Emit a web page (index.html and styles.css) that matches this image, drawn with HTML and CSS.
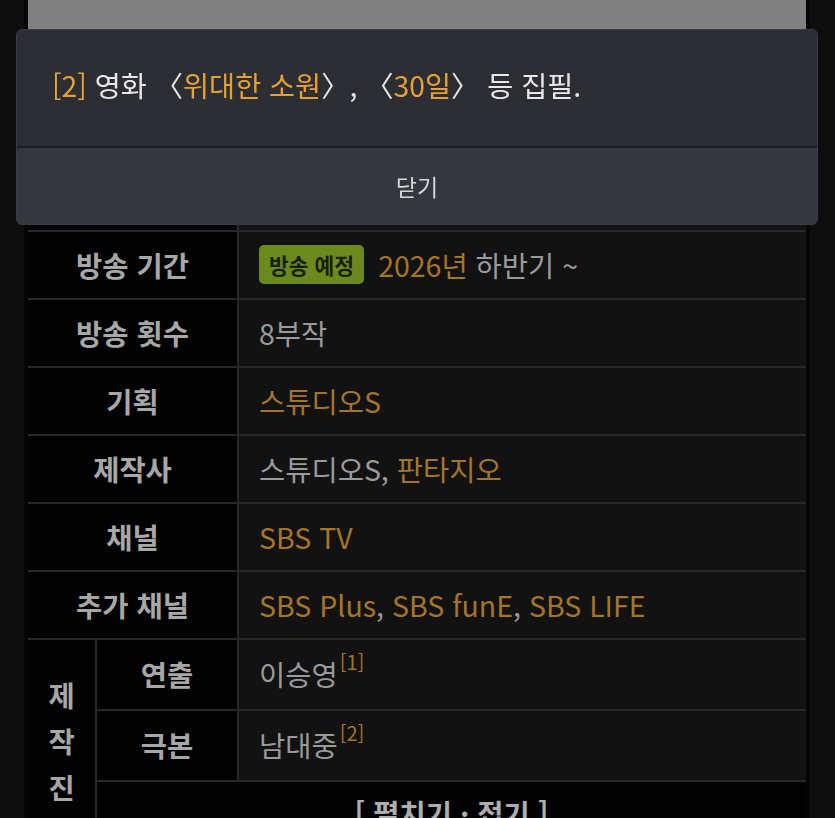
FILE: index.html
```html
<!DOCTYPE html>
<html lang="ko">
<head>
<meta charset="utf-8">
<title>작품 정보</title>
<link rel="stylesheet" href="styles.css">
</head>
<body>
<div class="doc">
  <div class="poster"></div>
  <div class="info">
    <div class="row">
      <div class="label">장르</div>
      <div class="value">드라마</div>
    </div>
    <div class="row">
      <div class="label">방송 기간</div>
      <div class="value"><span class="badge">방송 예정</span><a class="link">2026년</a> 하반기 ~</div>
    </div>
    <div class="row">
      <div class="label">방송 횟수</div>
      <div class="value">8부작</div>
    </div>
    <div class="row">
      <div class="label">기획</div>
      <div class="value"><a class="link">스튜디오S</a></div>
    </div>
    <div class="row">
      <div class="label">제작사</div>
      <div class="value">스튜디오S, <a class="link">판타지오</a></div>
    </div>
    <div class="row">
      <div class="label">채널</div>
      <div class="value"><a class="link">SBS TV</a></div>
    </div>
    <div class="row">
      <div class="label">추가 채널</div>
      <div class="value"><a class="link">SBS Plus</a>, <a class="link">SBS funE</a>, <a class="link">SBS LIFE</a></div>
    </div>
    <div class="group">
      <div class="group-label">제<br>작<br>진</div>
      <div class="group-body">
        <div class="row sub">
          <div class="sublabel">연출</div>
          <div class="value">이승영<sup class="ref">[1]</sup></div>
        </div>
        <div class="row sub">
          <div class="sublabel">극본</div>
          <div class="value">남대중<sup class="ref">[2]</sup></div>
        </div>
        <div class="toggle">[ 펼치기 · 접기 ]</div>
      </div>
    </div>
  </div>
</div>

<div class="modal">
  <div class="modal-body"><span class="hl">[2]</span> 영화 〈<span class="hl">위대한 소원</span>〉, 〈<span class="hl">30일</span>〉 등 집필.</div>
  <div class="modal-btn">닫기</div>
</div>
</body>
</html>
```

FILE: styles.css
```css
html, body {
  margin: 0;
  padding: 0;
  background: #0e0e0e;
}
body {
  font-family: "Noto Sans CJK KR", "Noto Sans", sans-serif;
  font-size: 28.5px;
  color: #9a9a9a;
  height: 818px;
  overflow: hidden;
}
.doc {
  margin-left: 24px;
  width: 778px;
  padding: 0 4px;
  background: #050505;
}
.poster {
  height: 164px;
  background: #808080;
}
.info {
  display: flex;
  flex-direction: column;
}
.row {
  display: flex;
  border-bottom: 2px solid #27282c;
}
.label {
  width: 209px;
  flex: none;
  background: #020202;
  color: #a7a7a7;
  font-weight: 700;
  text-align: center;
  line-height: 38px;
  padding: 14px 0;
}
.value {
  flex: 1;
  background: #121212;
  border-left: 2px solid #27282c;
  line-height: 38px;
  padding: 14px 20px;
  white-space: nowrap;
}
.link {
  color: #a5742b;
  text-decoration: none;
}
.badge {
  display: inline-block;
  vertical-align: top;
  background: #6b891d;
  color: #17200a;
  font-size: 21.5px;
  font-weight: 700;
  line-height: 39px;
  height: 39px;
  padding: 0 10px;
  border-radius: 5px;
  margin: -1px 14px 0 0;
}
.group {
  display: flex;
  background: #020202;
}
.group-label {
  width: 67px;
  flex: none;
  color: #a7a7a7;
  font-weight: 700;
  text-align: center;
  line-height: 46px;
  padding-top: 32px;
}
.group-body {
  flex: 1;
  border-left: 2px solid #27282c;
  display: flex;
  flex-direction: column;
}
.sublabel {
  width: 140px;
  flex: none;
  background: #020202;
  color: #a7a7a7;
  font-weight: 700;
  text-align: center;
  line-height: 38px;
  padding: 15px 0 16px;
}
.sub .value {
  padding: 15px 20px 16px;
}
.ref {
  color: #a5742b;
  font-size: 20px;
  line-height: 1;
  vertical-align: top;
  position: relative;
  top: -3px;
  margin-left: 2px;
}
.toggle {
  text-align: center;
  font-weight: 700;
  color: #adadad;
  line-height: 38px;
  padding: 12px 0 30px;
}
.modal {
  position: fixed;
  left: 16px;
  top: 29px;
  width: 800px;
  height: 194px;
  border: 1px solid #3a3d45;
  border-radius: 6px;
  background: #2c2e34;
  display: flex;
  flex-direction: column;
  overflow: hidden;
}
.modal-body {
  height: 116px;
  box-sizing: border-box;
  padding: 35px 35px 0;
  line-height: 40px;
  color: #e8e8e8;
  font-size: 28.3px;
  white-space: nowrap;
}
.hl {
  color: #e5a036;
}
.modal-btn {
  flex: 1;
  border-top: 2px solid #1d1e22;
  background: #34373d;
  color: #d6d6d6;
  font-size: 23px;
  display: flex;
  align-items: center;
  justify-content: center;
}
```
